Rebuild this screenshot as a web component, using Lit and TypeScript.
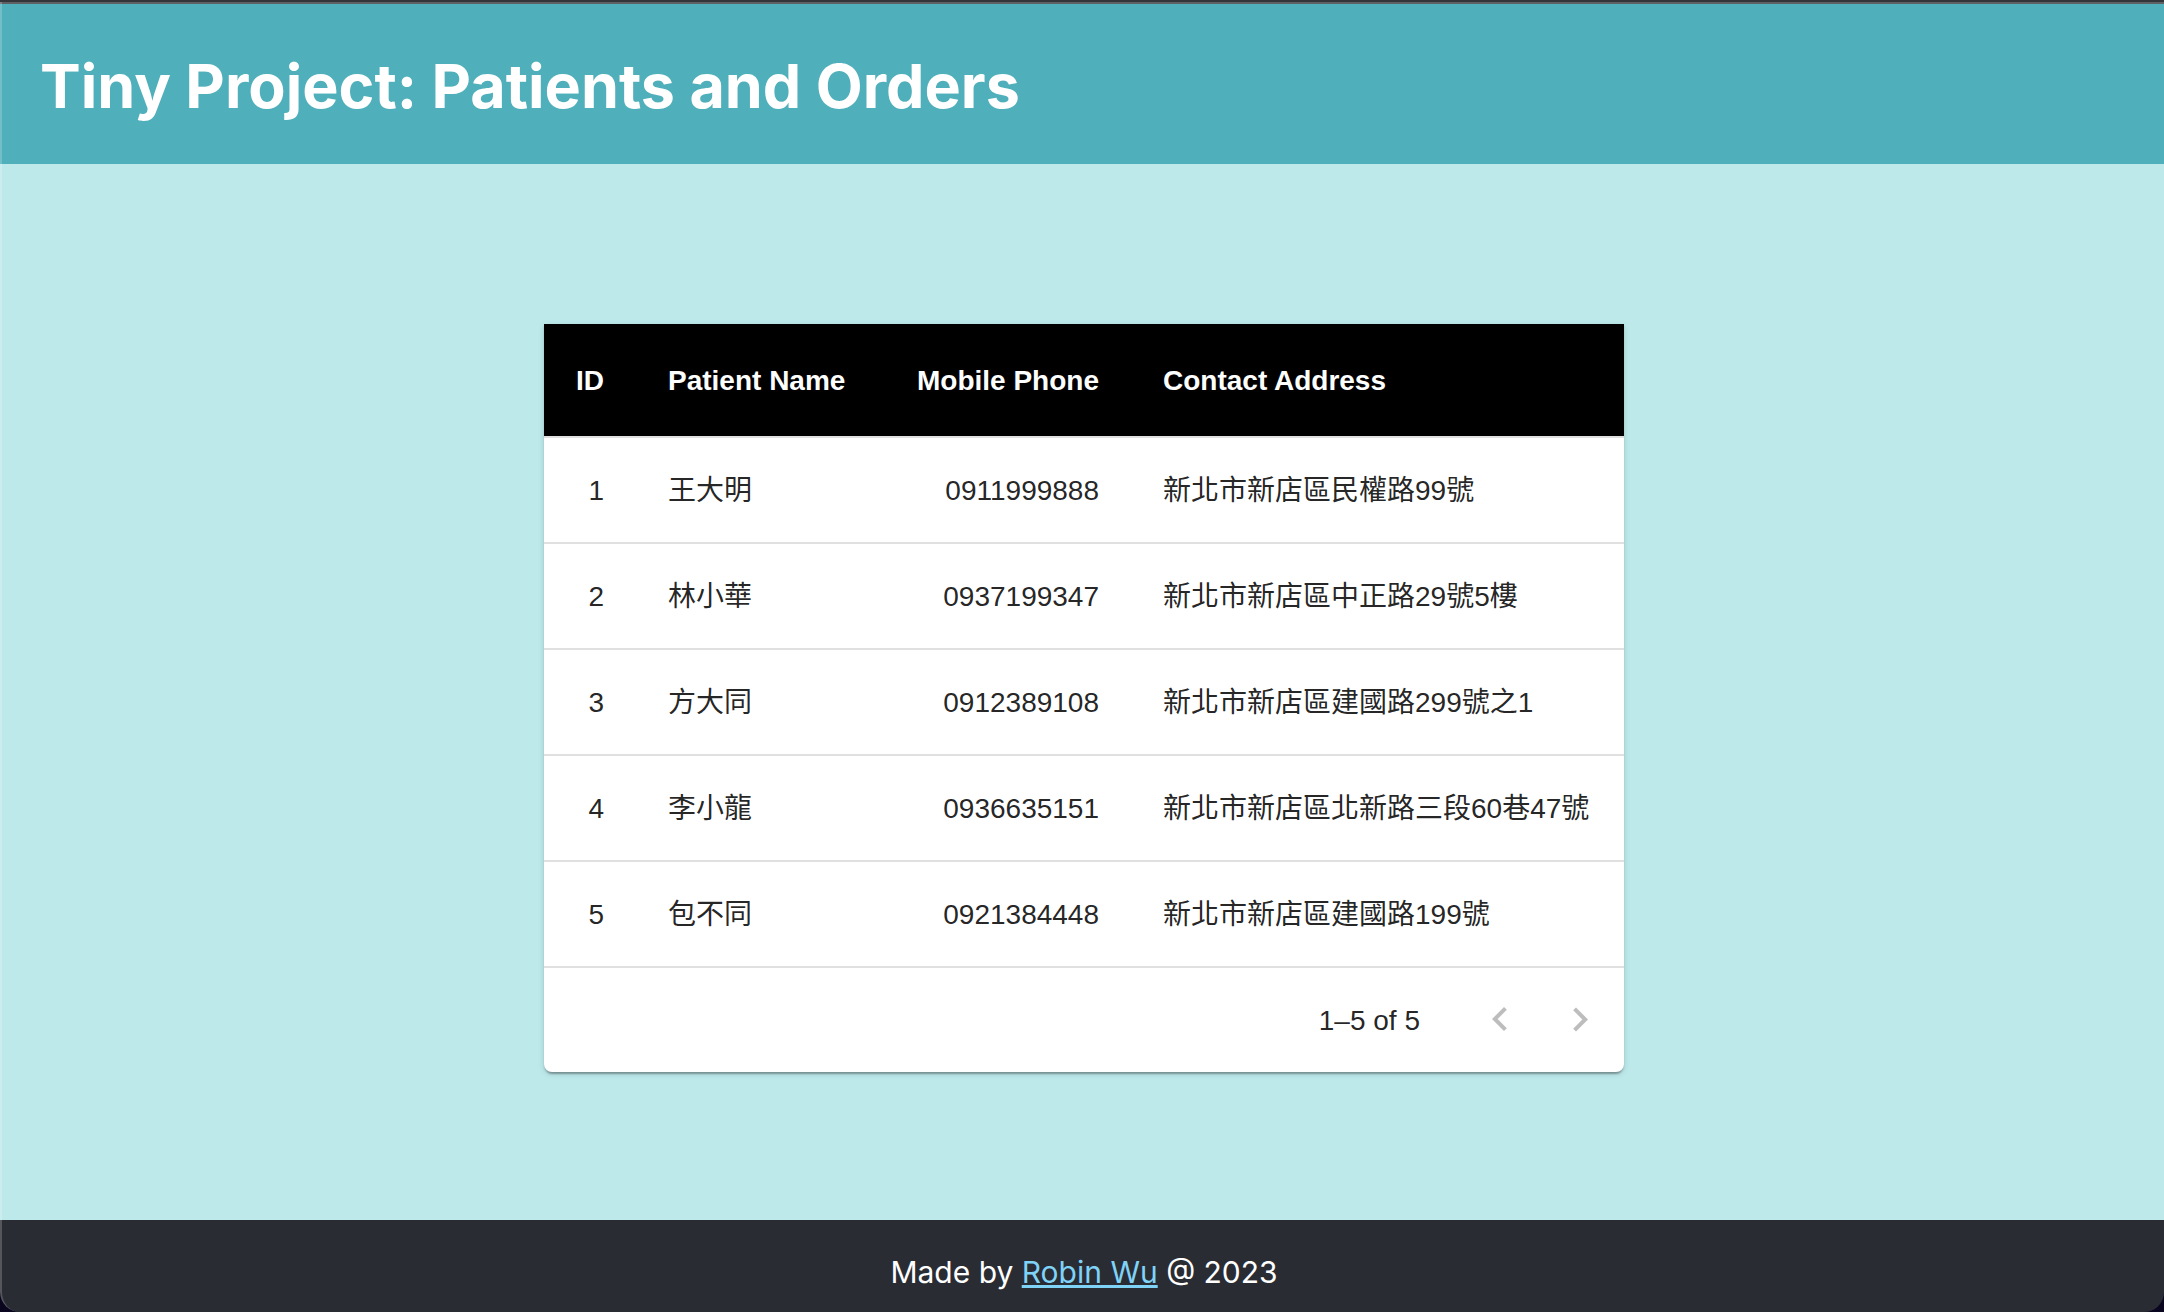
import { LitElement, html, css } from "lit";
import { customElement, state } from "lit/decorators.js";

interface Patient {
  id: number;
  name: string;
  phone: string;
  address: string;
}

const PATIENTS: Patient[] = [
  { id: 1, name: "王大明", phone: "0911999888", address: "新北市新店區民權路99號" },
  { id: 2, name: "林小華", phone: "0937199347", address: "新北市新店區中正路29號5樓" },
  { id: 3, name: "方大同", phone: "0912389108", address: "新北市新店區建國路299號之1" },
  { id: 4, name: "李小龍", phone: "0936635151", address: "新北市新店區北新路三段60巷47號" },
  { id: 5, name: "包不同", phone: "0921384448", address: "新北市新店區建國路199號" },
];

const PAGE_SIZE = 5;

@customElement("patient-table")
export class PatientTable extends LitElement {
  @state() private page = 0;

  static styles = css`
    :host {
      display: block;
      width: 50%;
      min-width: max-content;
    }
    .card {
      background: #fff;
      border-radius: 0 0 8px 8px;
      box-shadow: 0 4px 2px -2px rgba(0, 0, 0, 0.2), 0 2px 2px 0 rgba(0, 0, 0, 0.14),
        0 2px 6px 0 rgba(0, 0, 0, 0.12);
      color: rgba(0, 0, 0, 0.87);
      font-family: "Liberation Sans", "Noto Sans CJK TC", sans-serif;
      font-size: 28px;
      line-height: 40px;
    }
    .table {
      width: 100%;
      border-collapse: separate;
      border-spacing: 0;
    }
    .col-id {
      width: 92px;
    }
    .col-name {
      width: 246px;
    }
    .col-phone {
      width: 249px;
    }
    .cell {
      box-sizing: border-box;
      height: 106px;
      padding: 2px 32px 0;
      border-bottom: 2px solid #e0e0e0;
      text-align: left;
      font-weight: 400;
      white-space: nowrap;
    }
    .cell.head {
      height: 114px;
      background: #000;
      color: #fff;
      font-weight: 700;
    }
    .cell.num {
      text-align: right;
    }
    .pager {
      display: flex;
      align-items: center;
      justify-content: flex-end;
      height: 104px;
      padding-right: 4px;
    }
    .range {
      padding-top: 2px;
      margin-right: 40px;
    }
    .step {
      display: flex;
      padding: 16px;
      border: 0;
      background: none;
      color: inherit;
      cursor: pointer;
    }
    .step:disabled {
      color: rgba(0, 0, 0, 0.26);
      cursor: default;
    }
    .icon {
      width: 48px;
      height: 48px;
      fill: currentColor;
    }
  `;

  render() {
    const start = this.page * PAGE_SIZE;
    const rows = PATIENTS.slice(start, start + PAGE_SIZE);
    const end = start + rows.length;
    return html`
      <div class="card">
        <table class="table">
          <colgroup>
            <col class="col-id" />
            <col class="col-name" />
            <col class="col-phone" />
            <col />
          </colgroup>
          <thead>
            <tr>
              <th class="cell head num" scope="col">ID</th>
              <th class="cell head" scope="col">Patient Name</th>
              <th class="cell head num" scope="col">Mobile Phone</th>
              <th class="cell head" scope="col">Contact Address</th>
            </tr>
          </thead>
          <tbody>
            ${rows.map(
              (p) => html`<tr>
                <td class="cell num">${p.id}</td>
                <td class="cell">${p.name}</td>
                <td class="cell num">${p.phone}</td>
                <td class="cell">${p.address}</td>
              </tr>`
            )}
          </tbody>
        </table>
        <div class="pager">
          <span class="range">${start + 1}–${end} of ${PATIENTS.length}</span>
          <button
            class="step"
            aria-label="Go to previous page"
            ?disabled=${this.page === 0}
            @click=${() => this.page--}
          >
            <svg class="icon" viewBox="0 0 24 24" aria-hidden="true">
              <path d="M15.41 16.09l-4.58-4.59 4.58-4.59L14 5.5l-6 6 6 6z"></path>
            </svg>
          </button>
          <button
            class="step"
            aria-label="Go to next page"
            ?disabled=${end >= PATIENTS.length}
            @click=${() => this.page++}
          >
            <svg class="icon" viewBox="0 0 24 24" aria-hidden="true">
              <path d="M8.59 16.34l4.58-4.59-4.58-4.59L10 5.75l6 6-6 6z"></path>
            </svg>
          </button>
        </div>
      </div>
    `;
  }
}

@customElement("app-root")
export class AppRoot extends LitElement {
  static styles = css`
    :host {
      display: block;
      background: #0b0620;
      font-family: Inter, "Noto Sans CJK TC", sans-serif;
    }
    .window {
      position: relative;
      box-sizing: border-box;
      display: flex;
      flex-direction: column;
      min-height: 100vh;
      border-top: 2px solid #343539;
      border-radius: 0 0 20px 20px;
      overflow: hidden;
    }
    .window::after {
      content: "";
      position: absolute;
      inset: 0;
      border-left: 2px solid rgba(255, 255, 255, 0.2);
      border-bottom-left-radius: 20px;
      pointer-events: none;
    }
    .header {
      display: flex;
      align-items: center;
      box-sizing: border-box;
      height: 162px;
      padding: 4px 40px 0;
      border-top: 2px solid #5f6064;
      background: #4fafba;
      color: #fff;
    }
    .title {
      margin: 0;
      font-size: 61px;
      line-height: 80px;
      font-weight: 700;
    }
    .main {
      flex: 1;
      display: flex;
      flex-direction: column;
      align-items: center;
      padding: 160px 0 148px 4px;
      background: #bde9eb;
    }
    .footer {
      display: flex;
      align-items: center;
      justify-content: center;
      box-sizing: border-box;
      height: 92px;
      padding: 12px 0 0 4px;
      background: #2a2c34;
      color: #fff;
      font-size: 30px;
      line-height: 40px;
    }
    .credit {
      margin: 0;
    }
    .link {
      color: #7fd3f7;
    }
  `;

  render() {
    return html`
      <div class="window">
        <header class="header">
          <h1 class="title">Tiny Project: Patients and Orders</h1>
        </header>
        <main class="main">
          <patient-table></patient-table>
        </main>
        <footer class="footer">
          <p class="credit">Made by <a class="link" href="#">Robin Wu</a> @ 2023</p>
        </footer>
      </div>
    `;
  }
}
